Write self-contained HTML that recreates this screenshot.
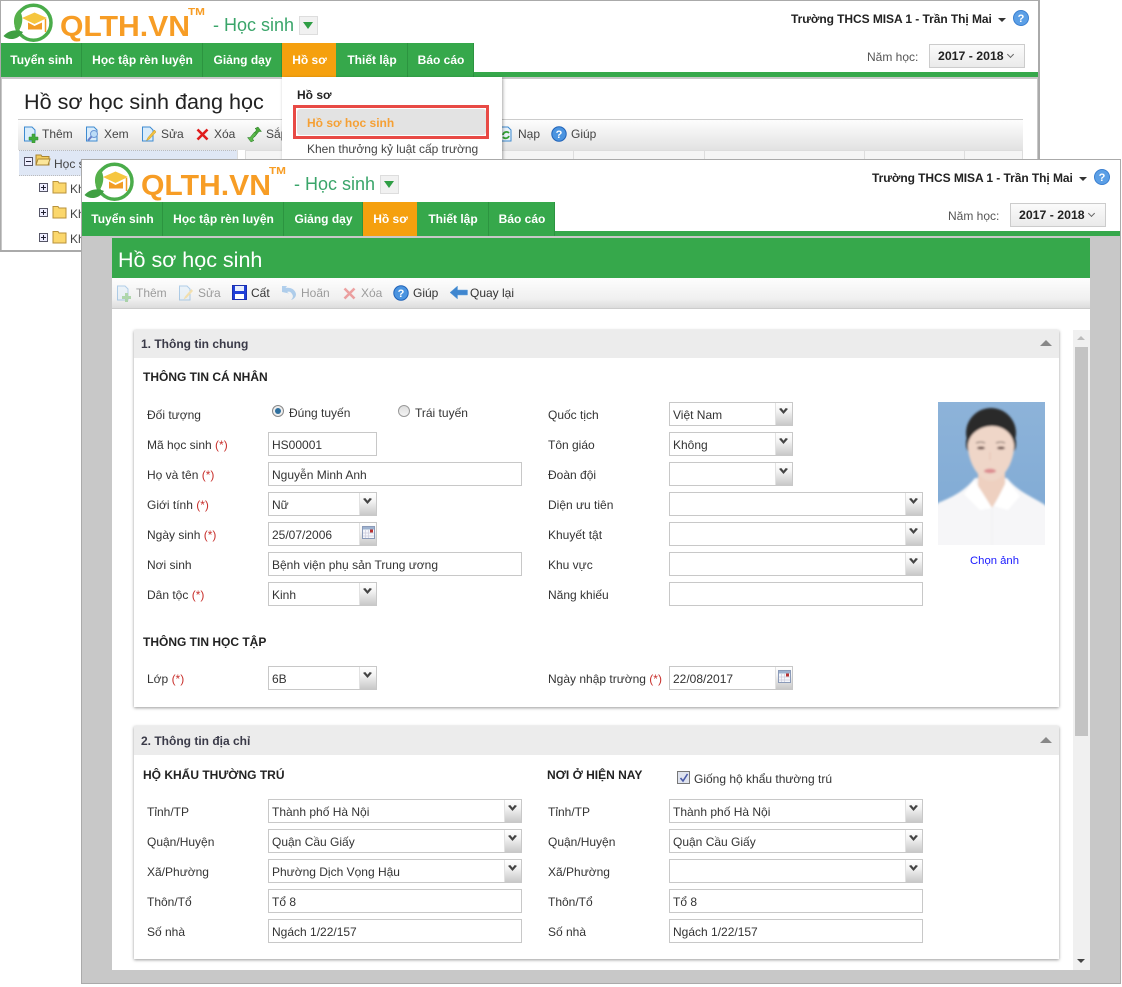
<!DOCTYPE html>
<html lang="vi"><head><meta charset="utf-8"><title>Hồ sơ học sinh</title>
<style>
html,body{margin:0;padding:0;background:#fff}
body{width:1122px;height:987px;position:relative;overflow:hidden;font-family:"Liberation Sans",sans-serif;font-size:12px;color:#333}
div,span,svg{position:absolute;box-sizing:border-box}
.t{white-space:nowrap;line-height:16px;height:16px}
.h{font-weight:bold;color:#222;font-size:12px}
.r2{position:static;color:#c8302c}
.i{height:24px;border:1px solid #c8c8c8;background:#fff;line-height:24px;padding-left:3px;white-space:nowrap;color:#333}
.b{right:0;top:0;bottom:0;width:17px;background:linear-gradient(#fff,#f4f4f4 35%,#c8c8c8);border-left:1px solid #e2e2e2}
.b:after{content:"";position:absolute;left:3px;top:5px;width:9px;height:6px;background:#444;clip-path:polygon(0 15%,25% 0,50% 45%,75% 0,100% 15%,50% 100%)}
.c:after{display:none}
.m{top:0;height:34px;background:#36a84b;color:#fff;font-weight:bold;font-size:12px;line-height:34px;text-align:center;padding-left:1px;border-right:1px solid #2c9440;white-space:nowrap}
.o{background:#f5a00e;border-right:0}
.tb{color:#444}
.dis{opacity:.38}
</style></head><body>

<!-- BACK WINDOW -->
<div style="left:0;top:0;width:1040px;height:252px;border:1px solid #aaa;border-width:1px 2px 2px 1px;background:#fff;overflow:hidden">
 <div style="left:-1px;top:-1px;width:1040px;height:252px">
  <svg style="left:0;top:0" width="212" height="44" viewBox="0 0 212 44">
   <circle cx="33.500" cy="22.700" r="17.500" fill="none" stroke="#4aac4a" stroke-width="3.500"/>
   <path d="M19 10C13 15 12 25 18 32C23 25 24 16 19 10z" fill="#55b04a"/>
   <path d="M3.500 36C9 30 16 29 23 32C18 40 9 41 3.500 36z" fill="#3f9f42"/>
   <path d="M22 18L34.500 12.500L47 18L34.500 24z" fill="#f6c63f"/>
   <path d="M28 22.500V29.500H42V22.500L34.500 26z" fill="#f29c24"/>
   <path d="M45.500 19V32" stroke="#f29c24" stroke-width="1.500"/>
   <text x="60" y="36" font-family="Liberation Sans" font-weight="bold" font-size="29" fill="#f79d25" textLength="130" lengthAdjust="spacingAndGlyphs">QLTH.VN</text>
   <text x="188" y="15" font-family="Liberation Sans" font-weight="bold" font-size="10" fill="#f79d25" textLength="17" lengthAdjust="spacingAndGlyphs">TM</text>
  </svg>
  <div class="t" style="left:213px;top:15px;height:20px;line-height:20px;font-size:18px;color:#3aa56a">- Học sinh</div>
  <div style="left:299px;top:16px;width:19px;height:19px;background:#f1f1f1;border:1px solid #ddd"><div style="left:3px;top:5px;border:5.500px solid transparent;border-top:7px solid #2f9e45;border-bottom:0"></div></div>
  <div class="t" style="left:791px;top:11px;color:#222;font-size:12px;font-weight:bold;letter-spacing:-.06px">Trường THCS MISA 1 - Trần Thị Mai</div>
  <div style="left:998px;top:18px;border:4px solid transparent;border-top:4px solid #333;border-bottom:0"></div>
  <svg style="left:1013px;top:10px" width="16" height="16" viewBox="0 0 16 16"><circle cx="8" cy="8" r="7.500" fill="#5b9fe6" stroke="#3a7fd0"/><text x="8" y="12" font-family="Liberation Sans" font-weight="bold" font-size="11" fill="#fff" text-anchor="middle">?</text></svg>
  <div class="t" style="left:867px;top:49px;color:#555">Năm học:</div>
  <div style="left:929px;top:44px;width:96px;height:24px;border:1px solid #ccc;background:linear-gradient(#fbfbfb,#eaeaea)"><div class="t" style="left:8px;top:3px;font-weight:bold;font-size:12.300px;color:#222">2017 - 2018</div><div style="left:78px;top:7px;width:5px;height:5px;border-right:1px solid #666;border-bottom:1px solid #666;transform:rotate(45deg)"></div></div>
  <div style="left:0;top:72px;width:1040px;height:5px;background:#36a84b"></div>
  <div style="left:0;top:43px;height:34px;width:474px">
   <div class="m" style="left:1px;width:81px">Tuyển sinh</div><div class="m" style="left:82px;width:121px">Học tập rèn luyện</div><div class="m" style="left:203px;width:79px">Giảng dạy</div><div class="m o" style="left:282px;width:54px">Hồ sơ</div><div class="m" style="left:336px;width:72px">Thiết lập</div><div class="m" style="left:408px;width:66px">Báo cáo</div>
  </div>
  <div style="left:0;top:77px;width:1040px;height:2px;background:#c8c8c8"></div>
  <div style="left:1037px;top:77px;width:1px;height:180px;background:#c8c8c8"></div>
  <div style="left:1px;top:77px;width:1px;height:180px;background:#c8c8c8"></div>
  <div class="t" style="left:24px;top:89px;height:26px;line-height:26px;font-size:21.600px;color:#222">Hồ sơ học sinh đang học</div>
  <div style="left:18px;top:119px;width:1005px;height:31px;border-top:1px solid #ccc;background:linear-gradient(#fdfdfd,#e2e2e2)"></div>
  <svg style="left:23px;top:126px" width="16" height="17" viewBox="0 0 16 17"><path d="M1.500 1H9l3 3v11H1.500z" fill="#d9ecfb" stroke="#3d8ad0"/><path d="M9 8h3v3h3v3h-3v3H9v-3H6v-3h3z" fill="#42ab3c" stroke="#2e8b2e" stroke-width=".5"/></svg>
  <div class="t tb" style="left:42px;top:126px">Thêm</div>
  <svg style="left:85px;top:126px" width="16" height="17" viewBox="0 0 16 17"><path d="M1.500 1H9l3 3v11H1.500z" fill="#d9ecfb" stroke="#3d8ad0"/><circle cx="9" cy="8" r="3.500" fill="#bcdcf7" stroke="#6d97d5"/><path d="M6.500 10.500L3 14.500" stroke="#6a7fc7" stroke-width="2"/></svg>
  <div class="t tb" style="left:104px;top:126px">Xem</div>
  <svg style="left:141px;top:126px" width="16" height="17" viewBox="0 0 16 17"><path d="M1.500 1H9l3 3v11H1.500z" fill="#d9ecfb" stroke="#3d8ad0"/><path d="M13.500 4L7 11.500l-1.500 3 3-1.500L15 6z" fill="#f2c040" stroke="#c99a20" stroke-width=".5"/></svg>
  <div class="t tb" style="left:161px;top:126px">Sửa</div>
  <svg style="left:196px;top:128px" width="13" height="13" viewBox="0 0 13 13"><path d="M1.500 1.500L11.500 11.500M11.500 1.500L1.500 11.500" stroke="#e01b1b" stroke-width="2.600"/></svg>
  <div class="t tb" style="left:214px;top:126px">Xóa</div>
  <svg style="left:247px;top:126px" width="16" height="17" viewBox="0 0 16 17"><path d="M11 1l3.500 4.500h-2.500L7.500 11 5.500 9l4-5-1.500-1.500z" fill="#4aa83a" stroke="#2c7a2c" stroke-width=".5"/><path d="M4 16L.5 11.500H3L7.500 6l2 2-4 5 1.500 1.500z" fill="#5ab84a" stroke="#2c7a2c" stroke-width=".5"/></svg>
  <div class="t tb" style="left:266px;top:126px">Sắp</div>
  <svg style="left:499px;top:126px" width="15" height="17" viewBox="0 0 15 17"><path d="M1.500 1H9l3 3v11H1.500z" fill="#e8f1fa" stroke="#3d8ad0"/><path d="M4 9a3.500 3.500 0 0 1 6-2M10 10a3.500 3.500 0 0 1-6 1" fill="none" stroke="#35a135" stroke-width="1.800"/></svg>
  <div class="t tb" style="left:518px;top:126px">Nạp</div>
  <svg style="left:551px;top:126px" width="16" height="16" viewBox="0 0 16 16"><circle cx="8" cy="8" r="7.200" fill="#4b94e0" stroke="#1f62b8"/><text x="8" y="12" font-family="Liberation Sans" font-weight="bold" font-size="11" fill="#fff" text-anchor="middle">?</text></svg>
  <div class="t tb" style="left:571px;top:126px">Giúp</div>
  <div style="left:245px;top:150px;width:778px;height:30px;background:#f5f5f5;border:1px solid #ddd"></div>
  <div style="left:573px;top:150px;width:1px;height:30px;background:#ddd"></div><div style="left:704px;top:150px;width:1px;height:30px;background:#ddd"></div><div style="left:864px;top:150px;width:1px;height:30px;background:#ddd"></div><div style="left:964px;top:150px;width:1px;height:30px;background:#ddd"></div>
  <div style="left:19px;top:150px;width:219px;height:26px;background:#dfe7f5;border-top:1px dotted #bbb;border-bottom:1px dotted #bbb"></div>
  <div style="left:237px;top:150px;width:1px;height:110px;background:#ddd"></div>
  <div style="left:24px;top:157px;width:9px;height:9px;border:1px solid #556;background:#eef"><div style="left:1px;top:3px;width:5px;height:1px;background:#223"></div></div>
  <svg style="left:35px;top:153px" width="16" height="14" viewBox="0 0 16 14"><path d="M1 2h5l1 1.500h7V12H1z" fill="#f3cd60" stroke="#a98634"/><path d="M1 12l2-6h12l-2 6z" fill="#fbe69a" stroke="#a98634"/></svg>
  <div class="t" style="left:54px;top:156px;color:#444">Học s</div>
  <div style="left:39px;top:183px;width:9px;height:9px;border:1px solid #556;background:#eef"><div style="left:1px;top:3px;width:5px;height:1px;background:#223"></div><div style="left:3px;top:1px;width:1px;height:5px;background:#223"></div></div>
  <div style="left:39px;top:208px;width:9px;height:9px;border:1px solid #556;background:#eef"><div style="left:1px;top:3px;width:5px;height:1px;background:#223"></div><div style="left:3px;top:1px;width:1px;height:5px;background:#223"></div></div>
  <div style="left:39px;top:233px;width:9px;height:9px;border:1px solid #556;background:#eef"><div style="left:1px;top:3px;width:5px;height:1px;background:#223"></div><div style="left:3px;top:1px;width:1px;height:5px;background:#223"></div></div>
  <svg style="left:52px;top:180px" width="15" height="14" viewBox="0 0 15 14"><path d="M1 1.500h5l1 1.500h7v10H1z" fill="#fbd76c" stroke="#b8923a"/></svg>
  <svg style="left:52px;top:205px" width="15" height="14" viewBox="0 0 15 14"><path d="M1 1.500h5l1 1.500h7v10H1z" fill="#fbd76c" stroke="#b8923a"/></svg>
  <svg style="left:52px;top:230px" width="15" height="14" viewBox="0 0 15 14"><path d="M1 1.500h5l1 1.500h7v10H1z" fill="#fbd76c" stroke="#b8923a"/></svg>
  <div class="t" style="left:70px;top:181px;color:#444">Khối</div><div class="t" style="left:70px;top:206px;color:#444">Khối</div><div class="t" style="left:70px;top:231px;color:#444">Khối</div>
  <!-- dropdown -->
  <div style="left:282px;top:77px;width:220px;height:100px;background:#fff;box-shadow:1px 1px 3px rgba(0,0,0,.35)"></div>
  <div class="t" style="left:297px;top:87px;font-weight:bold;font-size:12px;color:#222">Hồ sơ</div>
  <div style="left:293px;top:105px;width:196px;height:34px;border:3px solid #e84a45"></div>
  <div style="left:297px;top:109px;width:189px;height:26px;background:#e3e3e3;border-radius:3px"></div>
  <div class="t" style="left:307px;top:115px;font-weight:bold;font-size:12px;color:#f5a035">Hồ sơ học sinh</div>
  <div class="t" style="left:307px;top:141px;color:#444">Khen thưởng kỷ luật cấp trường</div>
 </div>
</div>

<!-- FRONT WINDOW -->
<div style="left:81px;top:159px;width:1040px;height:825px;border:1px solid #aaa;background:#c8c8c8;overflow:hidden">
 <div style="left:-82px;top:-160px;width:1122px;height:987px">
  <div style="left:82px;top:160px;width:1040px;height:76px;background:#fff"></div>
  <svg style="left:81px;top:159px" width="212" height="44" viewBox="0 0 212 44">
   <circle cx="33.500" cy="22.700" r="17.500" fill="none" stroke="#4aac4a" stroke-width="3.500"/>
   <path d="M19 10C13 15 12 25 18 32C23 25 24 16 19 10z" fill="#55b04a"/>
   <path d="M3.500 36C9 30 16 29 23 32C18 40 9 41 3.500 36z" fill="#3f9f42"/>
   <path d="M22 18L34.500 12.500L47 18L34.500 24z" fill="#f6c63f"/>
   <path d="M28 22.500V29.500H42V22.500L34.500 26z" fill="#f29c24"/>
   <path d="M45.500 19V32" stroke="#f29c24" stroke-width="1.500"/>
   <text x="60" y="36" font-family="Liberation Sans" font-weight="bold" font-size="29" fill="#f79d25" textLength="130" lengthAdjust="spacingAndGlyphs">QLTH.VN</text>
   <text x="188" y="15" font-family="Liberation Sans" font-weight="bold" font-size="10" fill="#f79d25" textLength="17" lengthAdjust="spacingAndGlyphs">TM</text>
  </svg>
  <div class="t" style="left:294px;top:174px;height:20px;line-height:20px;font-size:18px;color:#3aa56a">- Học sinh</div>
  <div style="left:380px;top:175px;width:19px;height:19px;background:#f1f1f1;border:1px solid #ddd"><div style="left:3px;top:5px;border:5.500px solid transparent;border-top:7px solid #2f9e45;border-bottom:0"></div></div>
  <div class="t" style="left:872px;top:170px;color:#222;font-size:12px;font-weight:bold;letter-spacing:-.06px">Trường THCS MISA 1 - Trần Thị Mai</div>
  <div style="left:1079px;top:177px;border:4px solid transparent;border-top:4px solid #333;border-bottom:0"></div>
  <svg style="left:1094px;top:169px" width="16" height="16" viewBox="0 0 16 16"><circle cx="8" cy="8" r="7.500" fill="#5b9fe6" stroke="#3a7fd0"/><text x="8" y="12" font-family="Liberation Sans" font-weight="bold" font-size="11" fill="#fff" text-anchor="middle">?</text></svg>
  <div class="t" style="left:948px;top:208px;color:#555">Năm học:</div>
  <div style="left:1010px;top:203px;width:96px;height:24px;border:1px solid #ccc;background:linear-gradient(#fbfbfb,#eaeaea)"><div class="t" style="left:8px;top:3px;font-weight:bold;font-size:12.300px;color:#222">2017 - 2018</div><div style="left:78px;top:7px;width:5px;height:5px;border-right:1px solid #666;border-bottom:1px solid #666;transform:rotate(45deg)"></div></div>
  <div style="left:82px;top:231px;width:1040px;height:5px;background:#36a84b"></div>
  <div style="left:81px;top:202px;height:34px;width:474px">
   <div class="m" style="left:1px;width:81px">Tuyển sinh</div><div class="m" style="left:82px;width:121px">Học tập rèn luyện</div><div class="m" style="left:203px;width:79px">Giảng dạy</div><div class="m o" style="left:282px;width:54px">Hồ sơ</div><div class="m" style="left:336px;width:72px">Thiết lập</div><div class="m" style="left:408px;width:66px">Báo cáo</div>
  </div>

  <!-- content area -->
  <div style="left:112px;top:238px;width:978px;height:732px;background:#fff"></div>
  <div style="left:112px;top:238px;width:978px;height:40px;background:#36a84b"></div>
  <div class="t" style="left:118px;top:246px;height:28px;line-height:28px;font-size:21.500px;color:#fff">Hồ sơ học sinh</div>
  <div style="left:112px;top:278px;width:978px;height:31px;background:linear-gradient(#fdfdfd,#f0f0f0 70%,#dcdcdc);border-bottom:1px solid #ccc"></div>

  <svg class="dis" style="left:116px;top:285px" width="16" height="17" viewBox="0 0 16 17"><path d="M1.500 1H9l3 3v11H1.500z" fill="#d9ecfb" stroke="#3d8ad0"/><path d="M9 8h3v3h3v3h-3v3H9v-3H6v-3h3z" fill="#42ab3c"/></svg>
  <div class="t tb" style="left:136px;top:285px;opacity:.5">Thêm</div>
  <svg class="dis" style="left:178px;top:285px" width="16" height="17" viewBox="0 0 16 17"><path d="M1.500 1H9l3 3v11H1.500z" fill="#d9ecfb" stroke="#3d8ad0"/><path d="M13.500 4L7 11.500l-1.500 3 3-1.500L15 6z" fill="#f2c040"/></svg>
  <div class="t tb" style="left:198px;top:285px;opacity:.5">Sửa</div>
  <svg style="left:232px;top:285px" width="15" height="15" viewBox="0 0 15 15"><path d="M.5.5h14v14H.5z" fill="#1f3fd8" stroke="#1a2fb0"/><rect x="3" y="1" width="9" height="5" fill="#e8eefc"/><rect x="3" y="9" width="9" height="5" fill="#fff"/></svg>
  <div class="t" style="left:251px;top:285px;color:#333">Cất</div>
  <svg class="dis" style="left:281px;top:284px" width="16" height="17" viewBox="0 0 16 17"><path d="M1 2l5 0-1.500 2C9 3 14 5 15 10c0 3-2 5-5 6 2-2 2.500-4 1-6-1-2-3-3-5-2L8 9.500 1 8z" fill="#3f8fdc"/></svg>
  <div class="t tb" style="left:301px;top:285px;opacity:.5">Hoãn</div>
  <svg class="dis" style="left:343px;top:287px" width="13" height="13" viewBox="0 0 13 13"><path d="M1.500 1.500L11.500 11.500M11.500 1.500L1.500 11.500" stroke="#e01b1b" stroke-width="2.600"/></svg>
  <div class="t tb" style="left:361px;top:285px;opacity:.5">Xóa</div>
  <svg style="left:393px;top:285px" width="16" height="16" viewBox="0 0 16 16"><circle cx="8" cy="8" r="7.200" fill="#4b94e0" stroke="#1f62b8"/><text x="8" y="12" font-family="Liberation Sans" font-weight="bold" font-size="11" fill="#fff" text-anchor="middle">?</text></svg>
  <div class="t" style="left:413px;top:285px;color:#333">Giúp</div>
  <svg style="left:450px;top:285px" width="18" height="15" viewBox="0 0 18 15"><path d="M0 7.500L7.500 1v4H17.500v5H7.500v4z" fill="#3f86cf" stroke="#6aa5dc" stroke-width=".5"/></svg>
  <div class="t" style="left:470px;top:285px;color:#333">Quay lại</div>

  <!-- scrollbar -->
  <div style="left:1073px;top:330px;width:17px;height:640px;background:#f0f0f0"></div>
  <div style="left:1075px;top:347px;width:13px;height:389px;background:#c3c3c3"></div>
  <div style="left:1077px;top:336px;border:4px solid transparent;border-bottom:4px solid #bbb;border-top:0"></div>
  <div style="left:1077px;top:959px;border:4px solid transparent;border-top:4px solid #444;border-bottom:0"></div>

  <!-- card 1 -->
  <div style="left:134px;top:330px;width:925px;height:377px;background:#fff;box-shadow:0 1px 3px rgba(0,0,0,.4)"></div>
  <div style="left:134px;top:330px;width:925px;height:28px;background:#ececec"></div>
  <div class="t" style="left:141px;top:336px;font-weight:bold;font-size:12px;color:#3a3a48">1. Thông tin chung</div>
  <div style="left:1040px;top:340px;border:6.500px solid transparent;border-bottom:6.500px solid #888;border-top:0"></div>
  <div class="t h" style="left:143px;top:369px">THÔNG TIN CÁ NHÂN</div>

  <div class="t" style="left:147px;top:407px">Đối tượng</div>
  <div style="left:272px;top:405px;width:12px;height:12px;border-radius:50%;border:1px solid #888;background:#eee"><div style="left:2px;top:2px;width:6px;height:6px;border-radius:50%;background:#2e6f9e"></div></div>
  <div class="t" style="left:289px;top:405px">Đúng tuyến</div>
  <div style="left:398px;top:405px;width:12px;height:12px;border-radius:50%;border:1px solid #999;background:linear-gradient(#ddd,#f5f5f5)"></div>
  <div class="t" style="left:415px;top:405px">Trái tuyến</div>

  <div class="t" style="left:147px;top:437px">Mã học sinh <span class="r2">(*)</span></div>
  <div class="i" style="left:268px;top:432px;width:109px">HS00001</div>
  <div class="t" style="left:147px;top:467px">Họ và tên <span class="r2">(*)</span></div>
  <div class="i" style="left:268px;top:462px;width:254px">Nguyễn Minh Anh</div>
  <div class="t" style="left:147px;top:497px">Giới tính <span class="r2">(*)</span></div>
  <div class="i" style="left:268px;top:492px;width:109px">Nữ<div class="b"></div></div>
  <div class="t" style="left:147px;top:527px">Ngày sinh <span class="r2">(*)</span></div>
  <div class="i" style="left:268px;top:522px;width:109px">25/07/2006<div class="b c"><svg style="left:2px;top:3px" width="13" height="14" viewBox="0 0 13 14"><rect x=".5" y=".5" width="12" height="12" fill="#f4f6fa" stroke="#8a9ab8"/><rect x="1" y="1" width="11" height="2.500" fill="#9db2cf"/><path d="M3.500 4v8M6.500 4v8M1 7h11M1 10h11" stroke="#ccd" stroke-width=".7"/><rect x="8" y="3.500" width="3" height="3" fill="#b83030"/></svg></div></div>
  <div class="t" style="left:147px;top:557px">Nơi sinh</div>
  <div class="i" style="left:268px;top:552px;width:254px">Bệnh viện phụ sản Trung ương</div>
  <div class="t" style="left:147px;top:587px">Dân tộc <span class="r2">(*)</span></div>
  <div class="i" style="left:268px;top:582px;width:109px">Kinh<div class="b"></div></div>

  <div class="t" style="left:548px;top:407px">Quốc tịch</div>
  <div class="i" style="left:669px;top:402px;width:124px">Việt Nam<div class="b"></div></div>
  <div class="t" style="left:548px;top:437px">Tôn giáo</div>
  <div class="i" style="left:669px;top:432px;width:124px">Không<div class="b"></div></div>
  <div class="t" style="left:548px;top:467px">Đoàn đội</div>
  <div class="i" style="left:669px;top:462px;width:124px"><div class="b"></div></div>
  <div class="t" style="left:548px;top:497px">Diện ưu tiên</div>
  <div class="i" style="left:669px;top:492px;width:254px"><div class="b"></div></div>
  <div class="t" style="left:548px;top:527px">Khuyết tật</div>
  <div class="i" style="left:669px;top:522px;width:254px"><div class="b"></div></div>
  <div class="t" style="left:548px;top:557px">Khu vực</div>
  <div class="i" style="left:669px;top:552px;width:254px"><div class="b"></div></div>
  <div class="t" style="left:548px;top:587px">Năng khiếu</div>
  <div class="i" style="left:669px;top:582px;width:254px"></div>

  <!-- photo -->
  <svg style="left:938px;top:402px" width="107" height="143" viewBox="0 0 107 143">
   <defs><linearGradient id="pb" x1="0" y1="0" x2="0" y2="1"><stop offset="0" stop-color="#8db3d9"/><stop offset="1" stop-color="#7ea9d4"/></linearGradient><filter id="sf" x="-10%" y="-10%" width="120%" height="120%"><feGaussianBlur stdDeviation="1"/></filter></defs>
   <rect width="107" height="143" fill="url(#pb)"/>
   <g filter="url(#sf)">
    <path d="M-8 112L0 101C12 96 26 90 37 76H69C80 90 95 95 107 103L115 112V155H-8z" fill="#f6f6f8"/>
    <path d="M40 68H67V84L54 106L40 84z" fill="#eed0c0"/>
    <ellipse cx="53" cy="31" rx="25" ry="25" fill="#2a2a2c"/>
    <rect x="28" y="30" width="50" height="23" rx="10" fill="#2a2a2c"/>
    <path d="M30 42C32 30 44 24 54 24C64 24 74 30 76 42C77 58 66 79 53 79C40 79 29 58 30 42z" fill="#efd6c8"/>
    <ellipse cx="43" cy="46" rx="4" ry="1.500" fill="#6a5048"/><ellipse cx="63" cy="46" rx="4" ry="1.500" fill="#6a5048"/>
    <path d="M38 41q5-2 9 0M58 41q5-2 9 0" stroke="#6a5a54" fill="none"/>
    <path d="M52 50v8" stroke="#e2c2b2"/>
    <ellipse cx="52" cy="69" rx="6" ry="2.200" fill="#dc8c90"/>
    <path d="M36 78L44 90L54 106L42 108L26 92z" fill="#fff"/><path d="M69 78L82 94L70 108L56 104z" fill="#fff"/>
    <path d="M54 106V143" stroke="#eeeef2"/>
   </g>
  </svg>
  <div class="t" style="left:970px;top:553px;color:#1a1aff;font-size:11.300px">Chọn ảnh</div>

  <div class="t h" style="left:143px;top:634px">THÔNG TIN HỌC TẬP</div>
  <div class="t" style="left:147px;top:671px">Lớp <span class="r2">(*)</span></div>
  <div class="i" style="left:268px;top:666px;width:109px">6B<div class="b"></div></div>
  <div class="t" style="left:548px;top:671px">Ngày nhập trường <span class="r2">(*)</span></div>
  <div class="i" style="left:669px;top:666px;width:124px">22/08/2017<div class="b c"><svg style="left:2px;top:3px" width="13" height="14" viewBox="0 0 13 14"><rect x=".5" y=".5" width="12" height="12" fill="#f4f6fa" stroke="#8a9ab8"/><rect x="1" y="1" width="11" height="2.500" fill="#9db2cf"/><path d="M3.500 4v8M6.500 4v8M1 7h11M1 10h11" stroke="#ccd" stroke-width=".7"/><rect x="8" y="3.500" width="3" height="3" fill="#b83030"/></svg></div></div>

  <!-- card 2 -->
  <div style="left:134px;top:726px;width:925px;height:233px;background:#fff;box-shadow:0 1px 3px rgba(0,0,0,.4)"></div>
  <div style="left:134px;top:726px;width:925px;height:29px;background:#ececec"></div>
  <div class="t" style="left:141px;top:733px;font-weight:bold;font-size:12px;color:#3a3a48">2. Thông tin địa chỉ</div>
  <div style="left:1040px;top:737px;border:6.500px solid transparent;border-bottom:6.500px solid #888;border-top:0"></div>
  <div class="t h" style="left:143px;top:767px">HỘ KHẨU THƯỜNG TRÚ</div>
  <div class="t h" style="left:547px;top:767px">NƠI Ở HIỆN NAY</div>
  <div style="left:677px;top:771px;width:13px;height:13px;border:1px solid #777;background:#dfe3ee"><svg style="left:1px;top:1px" width="10" height="10" viewBox="0 0 10 10"><path d="M1.500 5L4 8L8.500 1" fill="none" stroke="#4a5aa8" stroke-width="1.600"/></svg></div>
  <div class="t" style="left:694px;top:771px">Giống hộ khẩu thường trú</div>

  <div class="t" style="left:147px;top:804px">Tỉnh/TP</div>
  <div class="i" style="left:268px;top:799px;width:254px">Thành phố Hà Nội<div class="b"></div></div>
  <div class="t" style="left:147px;top:834px">Quận/Huyện</div>
  <div class="i" style="left:268px;top:829px;width:254px">Quận Cầu Giấy<div class="b"></div></div>
  <div class="t" style="left:147px;top:864px">Xã/Phường</div>
  <div class="i" style="left:268px;top:859px;width:254px">Phường Dịch Vọng Hậu<div class="b"></div></div>
  <div class="t" style="left:147px;top:894px">Thôn/Tổ</div>
  <div class="i" style="left:268px;top:889px;width:254px">Tổ 8</div>
  <div class="t" style="left:147px;top:924px">Số nhà</div>
  <div class="i" style="left:268px;top:919px;width:254px">Ngách 1/22/157</div>

  <div class="t" style="left:548px;top:804px">Tỉnh/TP</div>
  <div class="i" style="left:669px;top:799px;width:254px">Thành phố Hà Nội<div class="b"></div></div>
  <div class="t" style="left:548px;top:834px">Quận/Huyện</div>
  <div class="i" style="left:669px;top:829px;width:254px">Quận Cầu Giấy<div class="b"></div></div>
  <div class="t" style="left:548px;top:864px">Xã/Phường</div>
  <div class="i" style="left:669px;top:859px;width:254px"><div class="b"></div></div>
  <div class="t" style="left:548px;top:894px">Thôn/Tổ</div>
  <div class="i" style="left:669px;top:889px;width:254px">Tổ 8</div>
  <div class="t" style="left:548px;top:924px">Số nhà</div>
  <div class="i" style="left:669px;top:919px;width:254px">Ngách 1/22/157</div>
 </div>
</div>
</body></html>
